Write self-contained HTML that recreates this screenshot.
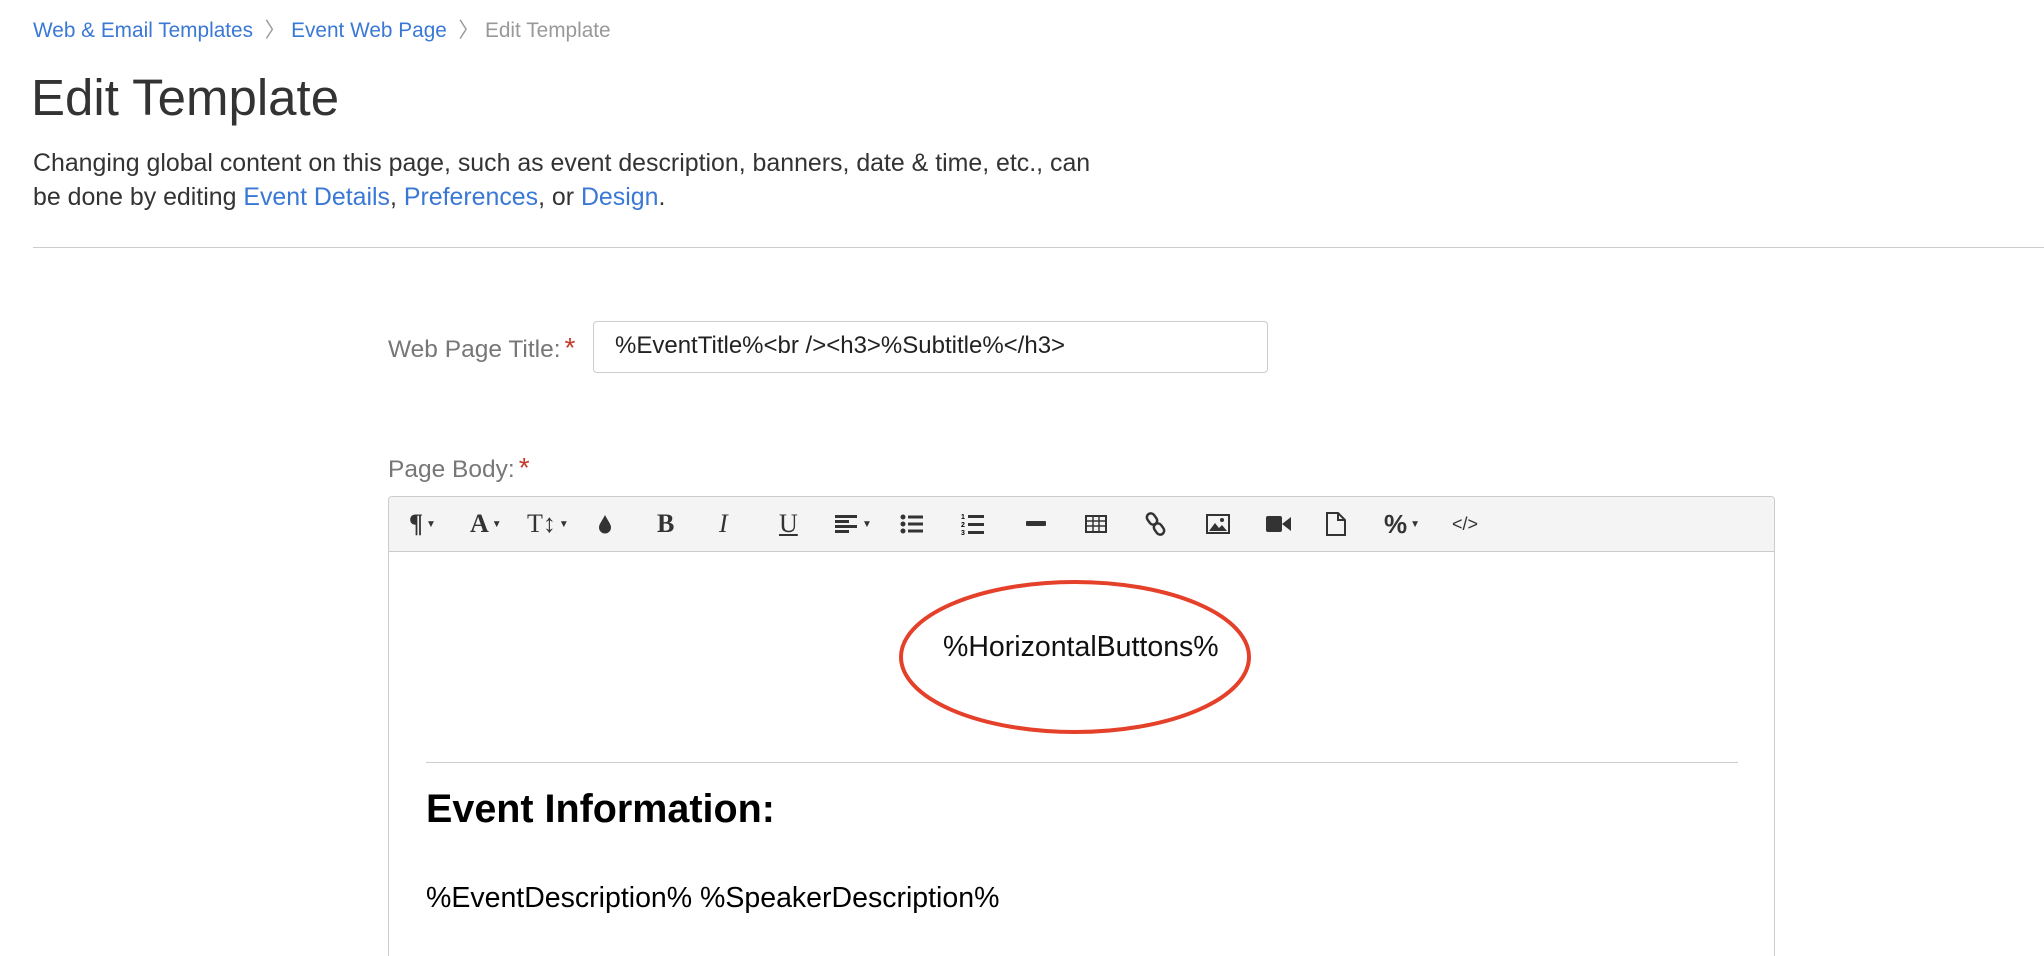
<!DOCTYPE html>
<html style="height:956px;overflow:hidden"><head><meta charset="utf-8"><style>
body{margin:0;width:2044px;height:956px;overflow:hidden;background:#fff;font-family:"Liberation Sans",sans-serif;position:relative}
.a{position:absolute;white-space:nowrap}
.blue{color:#3a78d6}
.tb{position:absolute;top:0;height:54px;display:flex;align-items:center;justify-content:center;font-family:"Liberation Serif",serif;font-size:26px;color:#333;font-weight:bold}
.car{font-size:10px;margin-left:3px;font-family:"Liberation Sans",sans-serif}
</style></head><body>
<div class="a" style="left:33px;top:13px;font-size:20.8px;color:#999"><span class="blue">Web &amp; Email Templates</span> &nbsp;〉 <span class="blue">Event Web Page</span> &nbsp;〉 Edit Template</div>
<div class="a" style="left:31px;top:68px;font-size:51px;color:#333">Edit Template</div>
<div class="a" style="left:33px;top:146px;font-size:24.9px;color:#333;line-height:34px">Changing global content on this page, such as event description, banners, date &amp; time, etc., can<br>be done by editing <span class="blue">Event Details</span>, <span class="blue">Preferences</span>, or <span class="blue">Design</span>.</div>
<div class="a" style="left:33px;top:247px;width:2011px;height:1px;background:#ccc"></div>
<div class="a" style="left:388px;top:332px;font-size:24.5px;color:#777">Web Page Title:<span style="color:#c0392b;font-size:28px;margin-left:4px">*</span></div>
<div class="a" style="left:593px;top:321px;width:675px;height:52px;border:1px solid #ccc;border-radius:4px;box-sizing:border-box"></div>
<div class="a" style="left:615px;top:332px;font-size:24px;color:#222">%EventTitle%&lt;br /&gt;&lt;h3&gt;%Subtitle%&lt;/h3&gt;</div>
<div class="a" style="left:388px;top:452px;font-size:24.5px;color:#777">Page Body:<span style="color:#c0392b;font-size:28px;margin-left:4px">*</span></div>
<div class="a" style="left:388px;top:496px;width:1387px;height:470px;border:1px solid #ccc;border-bottom:none;border-radius:4px 4px 0 0;box-sizing:border-box"></div>
<div class="a" style="left:389px;top:497px;width:1385px;height:54px;background:#f4f4f4;border-bottom:1px solid #ccc;border-radius:4px 4px 0 0">
 <div class="tb" style="left:20px">¶<span class="car">▼</span></div>
 <div class="tb" style="left:81px">A<span class="car">▼</span></div>
 <div class="tb" style="left:138px;font-weight:normal">T↕<span class="car">▼</span></div>
 <div class="tb" style="left:209px"><svg width="14" height="20"><path d="M7 1C4 7 1 10 1 13.5A6 6 0 0 0 13 13.5C13 10 10 7 7 1Z" fill="#333"/></svg></div>
 <div class="tb" style="left:268px">B</div>
 <div class="tb" style="left:330px;font-style:italic;font-weight:normal">I</div>
 <div class="tb" style="left:390px;text-decoration:underline;font-weight:normal">U</div>
 <div class="tb" style="left:446px"><svg width="24" height="18"><rect x="0" y="0" width="22" height="3" fill="#333"/><rect x="0" y="5" width="14" height="3" fill="#333"/><rect x="0" y="10" width="22" height="3" fill="#333"/><rect x="0" y="15" width="14" height="3" fill="#333"/></svg><span class="car">▼</span></div>
 <div class="tb" style="left:511px"><svg width="24" height="20"><circle cx="3" cy="3" r="2.5" fill="#333"/><circle cx="3" cy="10" r="2.5" fill="#333"/><circle cx="3" cy="17" r="2.5" fill="#333"/><rect x="8" y="1.5" width="15" height="3" fill="#333"/><rect x="8" y="8.5" width="15" height="3" fill="#333"/><rect x="8" y="15.5" width="15" height="3" fill="#333"/></svg></div>
 <div class="tb" style="left:572px"><svg width="24" height="24"><text x="0" y="7" font-size="7" font-family="Liberation Sans">1</text><text x="0" y="15" font-size="7" font-family="Liberation Sans">2</text><text x="0" y="23" font-size="7" font-family="Liberation Sans">3</text><rect x="7" y="3" width="16" height="3" fill="#333"/><rect x="7" y="11" width="16" height="3" fill="#333"/><rect x="7" y="19" width="16" height="3" fill="#333"/></svg></div>
 <div class="tb" style="left:637px"><svg width="20" height="6"><rect width="20" height="5" rx="1" fill="#333"/></svg></div>
 <div class="tb" style="left:696px"><svg width="22" height="18"><rect x="1" y="1" width="20" height="16" fill="none" stroke="#333" stroke-width="2"/><path d="M1 6H21M1 11H21M8 1V17M14 1V17" stroke="#333" stroke-width="1.5"/></svg></div>
 <div class="tb" style="left:756px"><svg width="22" height="24"><rect x="3" y="1" width="8" height="12" rx="4" transform="rotate(-35 7 7)" fill="none" stroke="#333" stroke-width="2.5"/><rect x="10" y="11" width="8" height="12" rx="4" transform="rotate(-35 14 17)" fill="none" stroke="#333" stroke-width="2.5"/></svg></div>
 <div class="tb" style="left:817px"><svg width="24" height="20"><rect x="1" y="1" width="22" height="18" fill="none" stroke="#333" stroke-width="2"/><path d="M3 17L9 9L13 14L16 11L21 17Z" fill="#333"/><circle cx="16" cy="6" r="2" fill="#333"/></svg></div>
 <div class="tb" style="left:877px"><svg width="26" height="18"><rect x="0" y="1" width="16" height="16" rx="2" fill="#333"/><path d="M16 9L25 2V16Z" fill="#333"/></svg></div>
 <div class="tb" style="left:937px"><svg width="20" height="24"><path d="M1 1H12L19 8V23H1Z M12 1V8H19" fill="none" stroke="#333" stroke-width="2"/></svg></div>
 <div class="tb" style="left:995px;font-family:'Liberation Sans',sans-serif">%<span class="car">▼</span></div>
 <div class="tb" style="left:1063px;font-size:18px;font-weight:normal;font-family:'Liberation Sans',sans-serif">&lt;/&gt;</div>
</div>
<div class="a" style="left:943px;top:631px;font-size:28.5px;color:#111">%HorizontalButtons%</div>
<svg class="a" style="left:895px;top:578px" width="360" height="160"><ellipse cx="180" cy="79" rx="174" ry="75" fill="none" stroke="#e4402a" stroke-width="4"/></svg>
<div class="a" style="left:426px;top:762px;width:1312px;height:1px;background:#ccc"></div>
<div class="a" style="left:426px;top:787px;font-size:39.5px;font-weight:bold;color:#000">Event Information:</div>
<div class="a" style="left:426px;top:882px;font-size:28.5px;color:#000">%EventDescription% %SpeakerDescription%</div>
</body></html>
